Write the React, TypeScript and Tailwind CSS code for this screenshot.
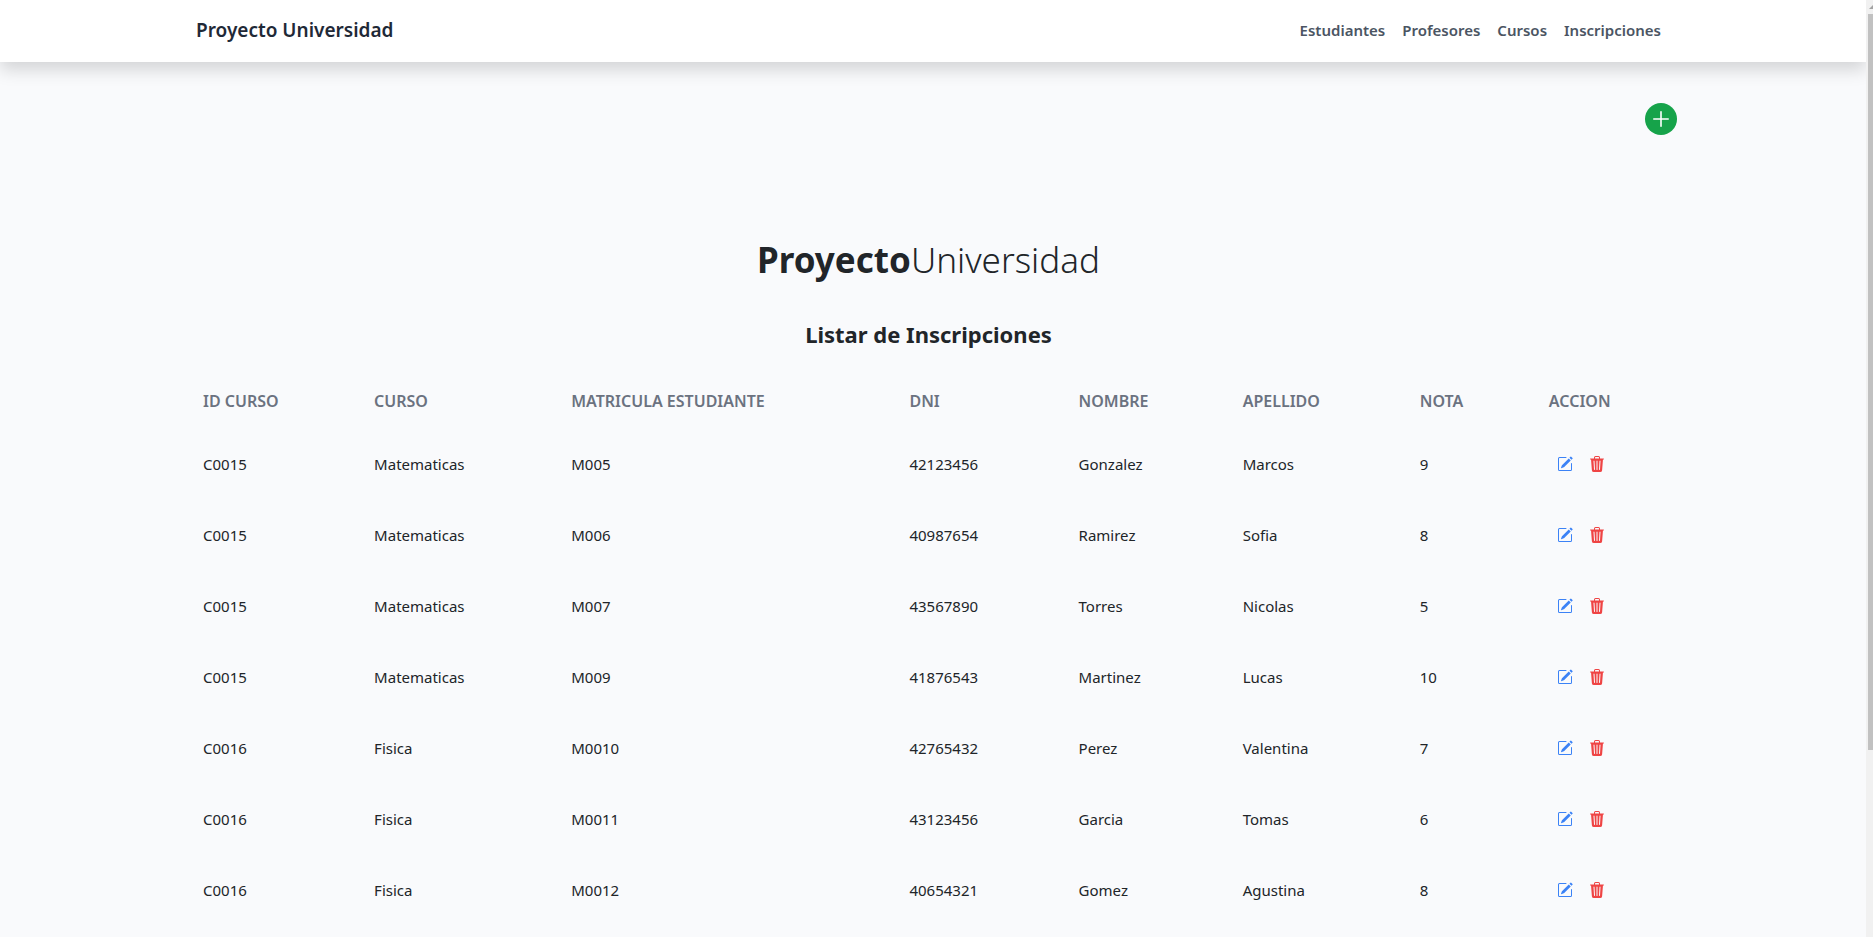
import { BsPencilSquare, BsTrash3Fill } from "react-icons/bs";

const links = ["Estudiantes", "Profesores", "Cursos", "Inscripciones"];

const columns = [
  { label: "ID CURSO", width: "w-[171px]" },
  { label: "CURSO", width: "w-[197px]" },
  { label: "MATRICULA ESTUDIANTE", width: "w-[338px]" },
  { label: "DNI", width: "w-[169px]" },
  { label: "NOMBRE", width: "w-[164px]" },
  { label: "APELLIDO", width: "w-[177px]" },
  { label: "NOTA", width: "w-[129px]" },
  { label: "ACCION", width: "w-[127px]" },
];

const rows = [
  ["C0015", "Matematicas", "M005", "42123456", "Gonzalez", "Marcos", "9"],
  ["C0015", "Matematicas", "M006", "40987654", "Ramirez", "Sofia", "8"],
  ["C0015", "Matematicas", "M007", "43567890", "Torres", "Nicolas", "5"],
  ["C0015", "Matematicas", "M009", "41876543", "Martinez", "Lucas", "10"],
  ["C0016", "Fisica", "M0010", "42765432", "Perez", "Valentina", "7"],
  ["C0016", "Fisica", "M0011", "43123456", "Garcia", "Tomas", "6"],
  ["C0016", "Fisica", "M0012", "40654321", "Gomez", "Agustina", "8"],
];

function PlusIcon() {
  return (
    <svg viewBox="0 0 16 16" className="size-4" fill="none" stroke="currentColor" strokeWidth="1.6" strokeLinecap="round">
      <path d="M8 0.8v14.4M0.8 8h14.4" />
    </svg>
  );
}

function Navbar() {
  return (
    <header className="bg-white shadow-[0_8px_16px_rgba(0,0,0,0.15)]">
      <div className="mx-auto flex h-[62px] max-w-[1538px] items-center justify-between pr-[41px] pb-[2px] pl-8">
        <a href="#inicio" className="text-[19px] leading-7 font-semibold text-[#1f2937]">
          Proyecto Universidad
        </a>
        <nav className="flex gap-[17px]">
          {links.map((link) => (
            <a
              key={link}
              href={`#${link.toLowerCase()}`}
              className="text-[15px] leading-6 font-semibold text-[#4b5563]"
            >
              {link}
            </a>
          ))}
        </nav>
      </div>
    </header>
  );
}

function EnrollmentTable() {
  return (
    <table className="mt-6 w-full table-fixed text-left text-[15px] leading-6">
      <thead>
        <tr className="h-[54px] text-base">
          {columns.map((column) => (
            <th key={column.label} scope="col" className={`${column.width} pl-[7px] font-semibold text-[#6b7280]`}>
              {column.label}
            </th>
          ))}
        </tr>
      </thead>
      <tbody>
        {rows.map((row) => (
          <tr key={row[2]} className="h-[71px]">
            {row.map((cell, index) => (
              <td key={index} className="pl-[7px]">
                {cell}
              </td>
            ))}
            <td className="pl-[15px]">
              <div className="flex gap-4">
                <button type="button" aria-label="Editar" className="text-[#3b82f6]">
                  <BsPencilSquare className="size-4" />
                </button>
                <button type="button" aria-label="Eliminar" className="text-[#ef4444]">
                  <BsTrash3Fill className="size-4" />
                </button>
              </div>
            </td>
          </tr>
        ))}
      </tbody>
    </table>
  );
}

function Scrollbar() {
  return (
    <div
      aria-hidden="true"
      className="fixed inset-y-0 right-0 flex w-[7px] flex-col overflow-hidden bg-[#f1f1f1] pl-[2px]"
    >
      <svg viewBox="0 0 5 14" className="h-[14px] w-[5px] shrink-0">
        <path d="M1 9L5 5V9Z" fill="#a3a3a3" />
      </svg>
      <div className="h-11/14 bg-[#c1c1c1]" />
    </div>
  );
}

export default function App() {
  return (
    <div className="h-screen overflow-hidden bg-[#f9fafc] pr-[7px] font-['Noto_Sans','Open_Sans',sans-serif] text-[#212529]">
      <Navbar />
      <main className="mx-auto max-w-[1538px] pr-[33px] pl-8">
        <div className="flex justify-end pt-[41px]">
          <button
            type="button"
            aria-label="Agregar"
            className="-mr-2 flex size-8 items-center justify-center rounded-full bg-[#16a34a] text-white"
          >
            <PlusIcon />
          </button>
        </div>
        <div className="pr-2 text-center">
          <h1 className="mt-[105px] text-[35px] leading-10 font-bold">
            Proyecto<span className="font-light">Universidad</span>
          </h1>
          <h2 className="mt-[38px] text-[22px] leading-8 font-bold">Listar de Inscripciones</h2>
        </div>
        <EnrollmentTable />
      </main>
      <Scrollbar />
    </div>
  );
}
